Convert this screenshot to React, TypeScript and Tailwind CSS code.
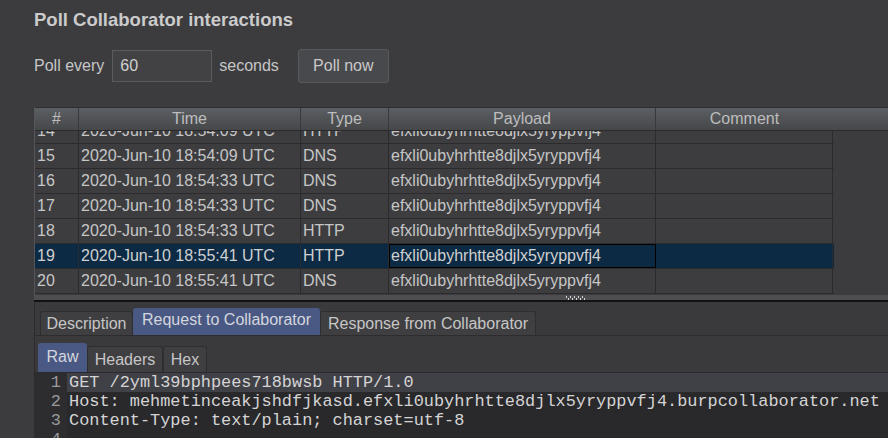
import React from 'react'

type Row = { n: number; time: string; type: string; selected?: boolean }

const rows: Row[] = [
  { n: 14, time: '2020-Jun-10 18:54:09 UTC', type: 'HTTP' },
  { n: 15, time: '2020-Jun-10 18:54:09 UTC', type: 'DNS' },
  { n: 16, time: '2020-Jun-10 18:54:33 UTC', type: 'DNS' },
  { n: 17, time: '2020-Jun-10 18:54:33 UTC', type: 'DNS' },
  { n: 18, time: '2020-Jun-10 18:54:33 UTC', type: 'HTTP' },
  { n: 19, time: '2020-Jun-10 18:55:41 UTC', type: 'HTTP', selected: true },
  { n: 20, time: '2020-Jun-10 18:55:41 UTC', type: 'DNS' },
]

const payload = 'efxli0ubyhrhtte8djlx5yryppvfj4'

const codeLines = [
  'GET /2yml39bphpees718bwsb HTTP/1.0',
  'Host: mehmetinceakjshdfjkasd.efxli0ubyhrhtte8djlx5yryppvfj4.burpcollaborator.net',
  'Content-Type: text/plain; charset=utf-8',
  '',
]

const Grip = () => (
  <svg width="20" height="4" viewBox="0 0 20 4" className="block">
    {[0, 1, 2, 3, 4, 5, 6, 7, 8, 9].map((i) => (
      <rect key={i} x={i * 2} y={i % 2 === 0 ? 0 : 2} width="1" height="2" fill="#d8d8d8" />
    ))}
  </svg>
)

export default function App() {
  return (
    <div className="w-[888px] h-[438px] overflow-hidden bg-[#3c3c3f] text-[#c6c6c6] font-['Liberation_Sans',Arial,sans-serif]">
      {/* Title */}
      <div className="h-[40px] pl-[34px] flex items-center">
        <h1 className="text-[18.5px] font-bold text-[#cbcbcb] leading-none">Poll Collaborator interactions</h1>
      </div>

      {/* Poll controls */}
      <div className="mt-[8px] h-[35px] pl-[34px] flex items-center text-[16px]">
        <span>Poll every</span>
        <div className="ml-[8px] w-[100px] h-[32px] bg-[#424245] border border-[#5b5b5e] flex items-center pl-[7px] text-[#cfcfcf]">
          60
        </div>
        <span className="ml-[7px]">seconds</span>
        <button className="ml-[19px] w-[91px] h-[34px] rounded-[3px] bg-[#48494c] border border-[#58595c] text-[#c8c8c8] text-[16px]">
          Poll now
        </button>
      </div>

      {/* Table */}
      <div className="mt-[24px] ml-[34px] w-[854px] h-[188px] border-l border-[#56565a] flex flex-col bg-[#3c3c3f]">
        <div className="h-[23px] shrink-0 flex border-t border-[#2e2e31] bg-gradient-to-b from-[#5c5f63] to-[#454749] text-[16px] text-[#bdbdbd] leading-none">
          <div className="w-[44px] flex items-center justify-center border-r border-[#38393c]">#</div>
          <div className="w-[222px] flex items-center justify-center border-r border-[#38393c]">Time</div>
          <div className="w-[88px] flex items-center justify-center border-r border-[#38393c]">Type</div>
          <div className="w-[267px] flex items-center justify-center border-r border-[#38393c]">Payload</div>
          <div className="w-[177px] flex items-center justify-center">Comment</div>
          <div className="flex-1" />
        </div>
        <div className="flex-1 min-h-0 overflow-hidden border-t border-[#2a2a2d]">
          <div className="-mt-[12px] w-[799px]">
            {rows.map((r) => (
              <div
                key={r.n}
                className={`h-[25px] flex border-b border-[#2b2b2e] text-[16px] leading-none ${
                  r.selected ? 'bg-[#0c2a43] text-[#d0d0d0]' : 'bg-[#3d3d40]'
                }`}
              >
                <div className="w-[44px] flex items-center pl-[2px] border-r border-[#2b2b2e]">{r.n}</div>
                <div className="w-[222px] flex items-center pl-[2px] border-r border-[#2b2b2e]">{r.time}</div>
                <div className="w-[88px] flex items-center pl-[2px] border-r border-[#2b2b2e]">{r.type}</div>
                <div
                  className={`w-[267px] flex items-center pl-[2px] border-r border-[#2b2b2e] ${
                    r.selected ? 'outline outline-1 -outline-offset-1 outline-black' : ''
                  }`}
                >
                  {payload}
                </div>
                <div className="w-[177px] border-r border-[#2b2b2e]" />
              </div>
            ))}
          </div>
        </div>
      </div>

      {/* Splitter */}
      <div className="ml-[34px] h-[7px] bg-[#4e4e52] border-b-2 border-[#111113] flex items-center pl-[532px]">
        <Grip />
      </div>

      {/* Bottom panel */}
      <div className="ml-[34px] h-[136px] bg-[#3a3a3d] flex flex-col border-l border-[#2c2c2f]">
        <div className="h-[33px] shrink-0 flex items-end pl-[5px] text-[16px] leading-none">
          <div className="h-[24px] w-[93px] flex items-center justify-center bg-[#3f3f42] border border-b-0 border-[#2e2e31] rounded-t-[3px]">
            Description
          </div>
          <div className="h-[27px] w-[187px] flex items-center justify-center bg-[#4a5984] text-[#d3d6de] rounded-t-[3px] pb-[3px]">
            Request to Collaborator
          </div>
          <div className="h-[24px] w-[216px] flex items-center justify-center bg-[#3f3f42] border border-b-0 border-[#2e2e31] rounded-t-[3px]">
            Response from Collaborator
          </div>
        </div>
        <div className="border-t border-[#2d2d30] h-[37px] shrink-0 flex items-end pl-[3px] text-[16px] leading-none">
          <div className="h-[29px] w-[49px] flex items-center justify-center bg-[#4a5984] text-[#d3d6de] rounded-t-[3px] pb-[2px]">
            Raw
          </div>
          <div className="h-[26px] w-[76px] flex items-center justify-center bg-[#3f3f42] border border-b-0 border-[#2e2e31] rounded-t-[3px]">
            Headers
          </div>
          <div className="h-[26px] w-[44px] flex items-center justify-center bg-[#3f3f42] border border-b-0 border-[#2e2e31] rounded-t-[3px]">
            Hex
          </div>
        </div>
        <div className="flex-1 min-h-0 overflow-hidden border-t border-[#2a2a2d] bg-[#29292c] font-['Liberation_Mono','Courier_New',monospace] text-[16.9px] leading-[19px] whitespace-pre">
          {codeLines.map((line, i) => (
            <div key={i} className="flex h-[19px]">
              <div className="w-[32px] shrink-0 pr-[6px] text-right text-[#9a9a9c] bg-[#2d2d30]">{i + 1}</div>
              <div className={`flex-1 pl-[2px] text-[#d4d4d4] ${i === 0 ? 'bg-[#404047]' : ''}`}>{line}</div>
            </div>
          ))}
        </div>
      </div>
    </div>
  )
}
